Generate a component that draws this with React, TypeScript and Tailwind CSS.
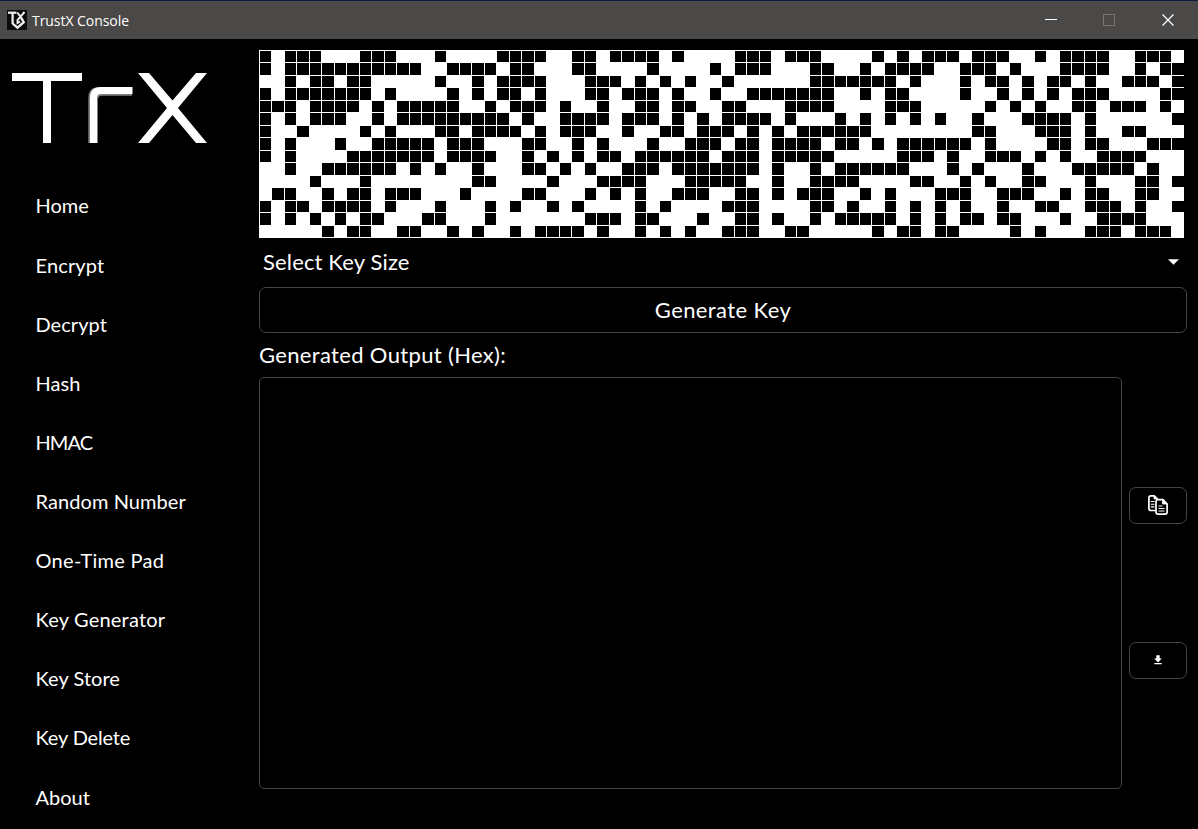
const BITS: number[][] = [
  [0,2,3,4,8,9,10,14,19,20,21,22,25,26,28,29,30,31,33,38,39,40,42,43,44,49,51,53,54,55,57,58,59,62,64,65,66,67,70,71,72],
  [0,2,3,4,5,6,7,8,9,10,11,12,15,16,17,18,20,21,25,26,31,36,38,39,40,44,45,48,50,51,52,53,56,57,58,60,64,65,66,67,70,72,73],
  [2,4,5,7,8,14,17,19,20,21,22,26,27,28,30,32,34,37,44,45,46,47,48,49,50,52,56,58,59,61,63,64,66,69,70,71,73],
  [0,2,3,4,5,6,7,8,10,15,17,19,20,22,26,27,29,30,31,33,36,39,40,41,42,43,44,45,48,50,51,56,59,61,63,65,66,67,72,73],
  [0,1,2,4,5,6,7,9,11,12,13,14,15,18,20,21,22,24,27,30,31,33,34,37,38,42,43,44,45,50,51,52,58,60,62,65,66,68,69,70,72],
  [0,2,4,5,6,9,11,12,13,14,15,16,17,18,19,21,24,25,26,27,29,30,31,33,35,37,38,39,40,42,46,48,50,52,54,57,61,62,63,64,66,73],
  [0,3,8,10,14,15,17,18,19,20,22,24,25,26,29,32,33,35,36,37,39,41,43,44,45,46,47,48,57,58,62,63,64,66,69,70],
  [0,2,6,9,10,11,12,13,15,16,17,21,22,25,27,31,34,35,36,38,39,41,42,43,44,46,47,49,51,52,53,54,55,56,58,63,64,66,67,71,72,73],
  [0,2,7,8,9,10,11,12,13,15,16,17,18,21,23,25,27,28,30,31,32,33,34,35,37,38,39,41,42,43,44,45,51,52,53,55,58,59,60,62,64,67,68,69,70],
  [2,5,6,7,8,9,10,12,14,17,21,22,24,26,29,30,31,33,34,35,36,37,38,39,41,44,46,47,48,49,50,51,55,57,61,65,66,67,68,69,71],
  [4,8,17,18,23,27,28,29,30,34,35,36,37,38,41,44,45,46,47,52,53,56,58,61,62,66,70,71,73],
  [1,2,5,7,8,10,11,12,16,21,22,26,28,30,33,34,35,38,39,41,43,44,45,48,50,54,55,56,59,60,61,64,66,67,70,71],
  [0,2,3,5,6,7,8,10,14,18,20,23,25,30,32,37,38,39,44,45,47,50,52,54,56,59,62,63,66,67,68,70,73],
  [0,2,4,6,8,9,13,14,18,26,27,28,30,31,35,38,39,41,44,46,47,48,49,50,52,54,56,57,59,60,64,67,68,69,70],
  [5,7,8,11,12,15,17,20,22,23,24,25,27,30,32,34,37,38,39,42,43,49,51,52,54,55,60,62,66,67,68,70,71,72],
];

const NAV: [string, string][] = [
  ["Home", "tracking-[0px]"],
  ["Encrypt", "tracking-[0.15px]"],
  ["Decrypt", "tracking-[0.05px]"],
  ["Hash", "tracking-[0.1px]"],
  ["HMAC", "tracking-[-0.9px]"],
  ["Random Number", "tracking-[0.08px]"],
  ["One-Time Pad", "tracking-[0.3px]"],
  ["Key Generator", "tracking-[0.2px]"],
  ["Key Store", "tracking-[0.05px]"],
  ["Key Delete", "tracking-[-0.15px]"],
  ["About", "tracking-[0px]"],
];

function TitleBar() {
  return (
    <header className="flex h-[39px] shrink-0 items-center border-t border-[#101a44] bg-[#4b4947]">
      <svg className="ml-[7px] block" width="20" height="20" viewBox="0 0 20 20">
        <rect width="20" height="20" fill="#0c0c0c" />
        <g fill="none" stroke="#f2f2f2" strokeWidth="2.2">
          <path d="M1 2.700H9.500" />
          <path d="M5.600 3V13.500L10.500 17.700L16.800 12.200L14 8" />
          <path d="M10.300 2.500L16 10M17.500 2L10.500 10V13L13 11.500" strokeWidth="1.900" />
        </g>
      </svg>
      <span className="ml-[5px] pt-px font-['Open_Sans',sans-serif] text-[14px] leading-5 tracking-[-0.05px] text-white">TrustX Console</span>
      <div className="ml-auto flex pr-px">
        <svg width="58" height="36" viewBox="0 0 58 36" shapeRendering="crispEdges">
          <path d="M24 17h12v1H24z" fill="#fff" />
        </svg>
        <svg width="59" height="36" viewBox="0 0 59 36">
          <rect x="24.500" y="12.500" width="11" height="11" fill="none" stroke="#787674" />
        </svg>
        <svg width="59" height="36" viewBox="0 0 59 36">
          <path d="M24.500 12.500l11 11m0-11l-11 11" stroke="#fff" strokeWidth="1.200" />
        </svg>
      </div>
    </header>
  );
}

function Logo() {
  return (
    <svg className="block" width="259" height="136" viewBox="0 39 259 136">
      <path d="M132 87v8.700H102q-4 0-4 4V143h-9.700V98q0-11 11-11z" fill="#808080" />
      <g fill="#fff">
        <path d="M12 73h70v8H51v62h-8V81H12z" />
        <path d="M132.500 87v7H101q-4 0-4 4v45h-7V98q0-11 11-11z" />
        <path d="M138 73h11l23.500 27.500L196 73h11l-29 35 29 35h-11l-23.500-28L149 143h-11l29-35z" />
      </g>
    </svg>
  );
}

function KeyMatrix() {
  return (
    <svg className="block shrink-0" width="925" height="188" viewBox="0 0 925 188" shapeRendering="crispEdges">
      <rect width="925" height="188" fill="#fff" />
      {BITS.map((row, r) =>
        row.map((c) => {
          const x = Math.floor(c * 12.5) + 1;
          const y = Math.floor(r * 12.5) + 1;
          return (
            <rect
              key={`${r}-${c}`}
              x={x}
              y={y}
              width={Math.floor((c + 1) * 12.5) - x}
              height={Math.floor((r + 1) * 12.5) - y}
              fill="#000"
            />
          );
        }),
      )}
    </svg>
  );
}

function CopyIcon() {
  return (
    <svg className="-mt-0.5" width="20" height="20" viewBox="0 0 20 20" fill="none" stroke="#fff" strokeWidth="1.700">
      <path d="M7.500 15.500H3Q.9 15.500.9 13.200V3Q.9.900 3 .900H6L9.500 4" />
      <path d="M6 .700V4H9.500Z" fill="#fff" strokeWidth=".8" />
      <path d="M2.800 6.500H6.500M2.800 9.200H6.500M2.800 11.900H6.500" strokeWidth="1.100" />
      <path d="M10.200 4.700H15L19.100 9V17Q19.100 19.100 17 19.100H10.200Q8 19.100 8 17V7Q8 4.700 10.200 4.700Z" />
      <path d="M14.500 4.700V9H19.200Z" fill="#fff" strokeWidth=".8" />
      <path d="M10.500 11H14.500M10.500 13.500H16.500M10.500 16H16.500" strokeWidth="1.100" />
    </svg>
  );
}

function DownloadIcon() {
  return (
    <svg className="-mt-0.5" width="8" height="10" viewBox="0 0 8 10" fill="#fff">
      <path d="M2.300.300h3.400v3.200H7.800L4 7.500.200 3.500h2.100zM.300 8h7.400v1.300h-7.400z" />
    </svg>
  );
}

const sideButton = "flex h-[37px] w-[58px] items-center justify-center rounded-[7px] border border-[#454545]";

export default function App() {
  return (
    <div className="flex h-[829px] w-[1198px] flex-col overflow-hidden bg-black font-['Lato',sans-serif] text-white">
      <TitleBar />
      <div className="flex min-h-0 flex-1">
        <aside className="w-[259px] shrink-0">
          <Logo />
          <nav className="flex flex-col pt-[0.5px] pl-[35.5px]">
            {NAV.map(([label, tracking]) => (
              <a
                key={label}
                className={`flex h-[59px] shrink-0 items-center text-[20px] leading-6 first:mb-px last:mt-px ${tracking}`}
              >
                {label}
              </a>
            ))}
          </nav>
        </aside>
        <main className="flex w-[928px] flex-col pt-[11px]">
          <KeyMatrix />
          <div className="flex h-[49px] shrink-0 items-center justify-between pr-[8px] pb-[2px] pl-1 text-[22px] leading-7">
            <span className="tracking-[0.15px]">Select Key Size</span>
            <svg width="11" height="6" viewBox="0 0 12 6">
              <path d="M0 0h12L6 6z" fill="#fff" />
            </svg>
          </div>
          <button className="flex h-[46px] shrink-0 items-center justify-center rounded-[7px] border border-[#454545] text-[22px] leading-7">
            <span className="tracking-[0.4px]">Generate Key</span>
          </button>
          <div className="flex h-[44px] shrink-0 items-center text-[22px] leading-7">
            <span className="tracking-[0.34px]">Generated Output (Hex):</span>
          </div>
          <div className="flex gap-[7px]">
            <div className="h-[412px] w-[863px] rounded-[5px] border border-[#454545]" />
            <div className="flex flex-col gap-[118px] pt-[110px]">
              <button className={sideButton}>
                <CopyIcon />
              </button>
              <button className={sideButton}>
                <DownloadIcon />
              </button>
            </div>
          </div>
        </main>
      </div>
    </div>
  );
}
